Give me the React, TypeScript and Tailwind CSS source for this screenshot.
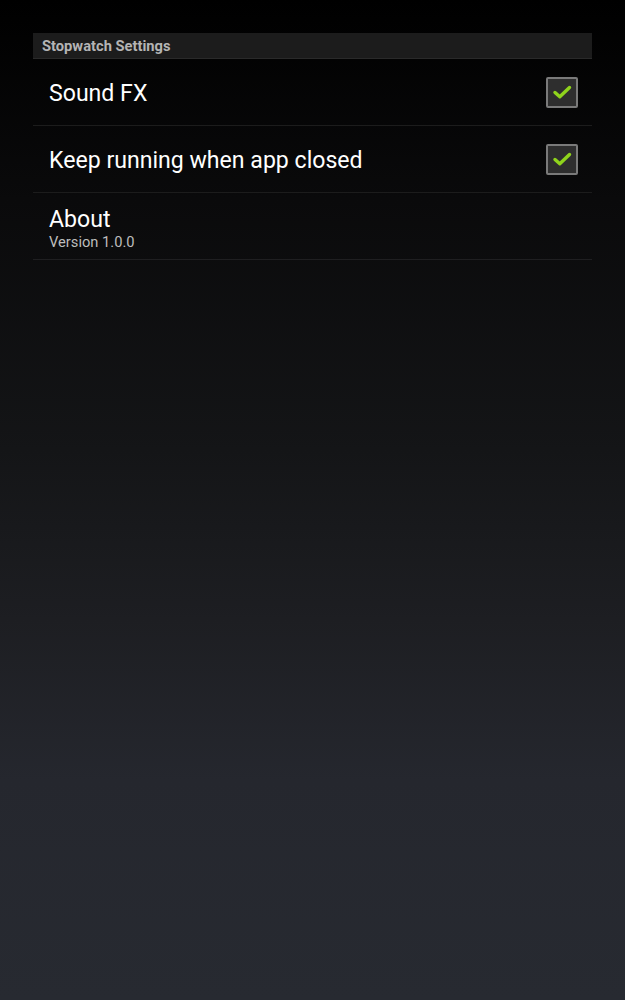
import React from "react";

function Check() {
  return (
    <div className="w-[32px] h-[31px] rounded-[2px] border-2 border-[#7a7a7a] bg-[#2e2e2e] flex items-center justify-center">
      <svg width="22" height="18" viewBox="0 0 22 18">
        <path d="M4 9.5 L8.8 13.8 L18.5 4.5" fill="none" stroke="#8fd31c" strokeWidth="3.4" strokeLinecap="round" strokeLinejoin="round" />
      </svg>
    </div>
  );
}

export default function App() {
  return (
    <div
      className="w-[625px] h-[1000px] bg-[linear-gradient(180deg,#000000_0%,#0a0a0b_20%,#141517_45%,#1d1e22_62%,#25272e_78%,#272a31_100%)] pt-[33px] px-[33px]"
      style={{ fontFamily: "Roboto, 'Noto Sans', sans-serif" }}
    >
      <div className="h-[26px] bg-[#1c1c1c] border-b border-[#2a2a2a] flex items-center pl-[9px]">
        <span className="text-[14.7px] font-bold text-[#b4b4b4] leading-none pt-[2px]">Stopwatch Settings</span>
      </div>
      <div className="h-[67px] border-b border-[#1c1c1c] flex items-center justify-between pl-[16px] pr-[14px]">
        <span className="text-[23.1px] text-white leading-none pt-[3px]">Sound FX</span>
        <Check />
      </div>
      <div className="h-[67px] border-b border-[#1c1c1c] flex items-center justify-between pl-[16px] pr-[14px]">
        <span className="text-[23.1px] text-white leading-none pt-[3px]">Keep running when app closed</span>
        <Check />
      </div>
      <div className="h-[67px] border-b border-[#1f1f21] flex flex-col justify-center pl-[16px] pt-[4px]">
        <span className="text-[23.1px] text-white leading-[27px]">About</span>
        <span className="text-[14.7px] text-[#bdbdbd] leading-[18px]">Version 1.0.0</span>
      </div>
    </div>
  );
}
